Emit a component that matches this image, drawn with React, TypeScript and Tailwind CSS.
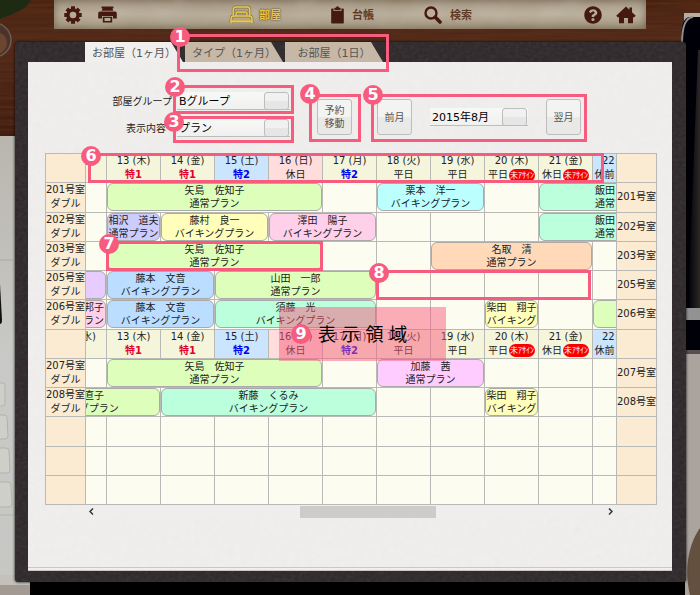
import { useState } from 'react'
import type { ReactNode } from 'react'
import { FaQuestionCircle } from 'react-icons/fa'

type Day = { label: string; note: string; kind: 'week' | 'sat' | 'sun'; noteStyle?: string; badge?: boolean }

type Slot = {
  span?: number
  color?: string
  name?: string
  plan?: string
  mark?: 'booking' | 'empty'
}

type Row = { room?: string; slots: Slot[] }

const GREEN = 'bg-[#ddffbb]'
const MINT = 'bg-[#bbffdd]'
const BLUE = 'bg-[#bbddff]'
const YELLOW = 'bg-[#ffffbb]'
const PINK = 'bg-[#ffd0ea]'
const PURPLE = 'bg-[#ccccff]'
const LILAC = 'bg-[#e6ccff]'
const CYAN = 'bg-[#bbffff]'
const ORANGE = 'bg-[#ffd9b8]'
const VIOLET = 'bg-[#ffccff]'

const red = 'font-bold text-[#e6002d]'
const blue = 'font-bold text-[#0000f0]'

const days: Day[] = [
  { label: '12 (水)', note: '', kind: 'week' },
  { label: '13 (木)', note: '特1', kind: 'week', noteStyle: red },
  { label: '14 (金)', note: '特1', kind: 'week', noteStyle: red },
  { label: '15 (土)', note: '特2', kind: 'sat', noteStyle: blue },
  { label: '16 (日)', note: '休日', kind: 'sun' },
  { label: '17 (月)', note: '特2', kind: 'week', noteStyle: blue },
  { label: '18 (火)', note: '平日', kind: 'week' },
  { label: '19 (水)', note: '平日', kind: 'week' },
  { label: '20 (木)', note: '平日', kind: 'week', badge: true },
  { label: '21 (金)', note: '休日', kind: 'week', badge: true },
  { label: '22', note: '休前', kind: 'sat' },
]

const dayColor = {
  week: 'bg-[#f5f5dc]',
  sat: 'bg-[#cce5ff]',
  sun: 'bg-[#ffdddd]',
}

const viking = 'バイキングプラン'
const normal = '通常プラン'
const empty = (n: number): Slot[] => Array.from({ length: n }, () => ({}))

const upperRows: Row[] = [
  {
    room: '201号室',
    slots: [
      {},
      { span: 4, color: GREEN, name: '矢島　佐知子', plan: normal },
      {},
      { span: 2, color: CYAN, name: '栗本　洋一', plan: viking },
      {},
      { span: 2, color: MINT, name: '飯田　　　', plan: normal },
    ],
  },
  {
    room: '202号室',
    slots: [
      {},
      { color: PURPLE, name: '相沢　道夫', plan: normal },
      { span: 2, color: YELLOW, name: '藤村　良一', plan: viking },
      { span: 2, color: PINK, name: '澤田　陽子', plan: viking },
      ...empty(3),
      { span: 2, color: MINT, name: '飯田　　　', plan: normal },
    ],
  },
  {
    room: '203号室',
    slots: [
      {},
      { span: 4, color: GREEN, name: '矢島　佐知子', plan: normal, mark: 'booking' },
      ...empty(2),
      { span: 3, color: ORANGE, name: '名取　清', plan: normal },
      {},
    ],
  },
  {
    room: '205号室',
    slots: [
      { color: LILAC },
      { span: 2, color: BLUE, name: '藤本　文音', plan: viking },
      { span: 3, color: GREEN, name: '山田　一郎', plan: normal },
      { mark: 'empty' },
      ...empty(4),
    ],
  },
  {
    room: '206号室',
    slots: [
      { color: PINK, name: '　　　邦子', plan: normal },
      { span: 2, color: BLUE, name: '藤本　文音', plan: viking },
      { span: 3, color: MINT, name: '須藤　光', plan: viking },
      ...empty(2),
      { color: YELLOW, name: '柴田　翔子', plan: 'バイキング' },
      {},
      { color: GREEN },
    ],
  },
]

const lowerRows: Row[] = [
  {
    room: '207号室',
    slots: [
      {},
      { span: 4, color: GREEN, name: '矢島　佐知子', plan: normal },
      {},
      { span: 2, color: VIOLET, name: '加藤　茜', plan: normal },
      ...empty(3),
    ],
  },
  {
    room: '208号室',
    slots: [
      { span: 2, color: GREEN, name: '　　　直子', plan: viking },
      { span: 4, color: MINT, name: '新藤　くるみ', plan: viking },
      ...empty(2),
      { color: YELLOW, name: '柴田　翔子', plan: 'バイキング' },
      ...empty(2),
    ],
  },
  { slots: empty(11) },
  { slots: empty(11) },
  { slots: empty(11) },
]

function Grain({ id, freq, className }: { id: string; freq: string; className: string }) {
  return (
    <svg className={`pointer-events-none absolute inset-0 size-full ${className}`} aria-hidden="true">
      <filter id={id}>
        <feTurbulence type="fractalNoise" baseFrequency={freq} numOctaves="3" />
        <feColorMatrix type="saturate" values="0" />
      </filter>
      <rect width="100%" height="100%" filter={`url(#${id})`} />
    </svg>
  )
}

function Desk() {
  return (
    <svg
      className="absolute inset-0 size-full"
      viewBox="0 0 700 595"
      preserveAspectRatio="none"
      aria-hidden="true"
    >
      <defs>
        <linearGradient id="wood" x1="0" y1="0" x2="0" y2="1">
          <stop offset="0" stopColor="#47200f" />
          <stop offset="0.3" stopColor="#532a1a" />
          <stop offset="1" stopColor="#3f1a0f" />
        </linearGradient>
        <linearGradient id="laptop" x1="0" y1="0" x2="0" y2="1">
          <stop offset="0" stopColor="#b9b6ad" />
          <stop offset="0.5" stopColor="#c9c9c7" />
          <stop offset="1" stopColor="#c6c6c3" />
        </linearGradient>
        <linearGradient id="glare" x1="0" y1="0" x2="1" y2="0">
          <stop offset="0" stopColor="#000008" />
          <stop offset="1" stopColor="#2d2825" />
        </linearGradient>
        <filter id="woodgrain">
          <feTurbulence type="fractalNoise" baseFrequency="0.012 0.35" numOctaves="3" />
          <feColorMatrix values="0 0 0 0 0.1  0 0 0 0 0.03  0 0 0 0 0.01  1.6 0 0 0 -0.55" />
        </filter>
      </defs>
      <rect width="700" height="595" fill="#000" />
      <rect width="700" height="140" fill="url(#wood)" />
      <rect width="700" height="140" filter="url(#woodgrain)" />
      <path d="M0 0H31C27 9 15 13 0 19Z" fill="#1e2a14" />
      <circle cx="-6" cy="40" r="17" fill="#4a3328" stroke="#6d5c50" strokeWidth="1.5" />
      <circle cx="-4" cy="43" r="11" fill="#6b4530" />
      <path d="M0 136H16V595H0Z" fill="url(#laptop)" />
      <path d="M0 260H13" stroke="#aaa89f" />
      <path d="M0 284L2 320Q2 324 0 324Z" fill="#111" />
      <g fill="#cfcfca" stroke="#b3b1a9">
        <path d="M-5 383H3Q5 383 5 386V403Q5 406 3 406H-5Z" />
        <path d="M-5 415H4Q7 415 7 418L8 436Q8 439 5 439H-5Z" />
        <path d="M-5 448H6Q9 448 9 451L10 470Q10 473 7 473H-5Z" />
        <path d="M-5 482H8Q11 482 11 485L12 504Q12 507 9 507H-5Z" />
        <path d="M-5 515H15" />
      </g>
      <path d="M0 575H30V595H0Z" fill="#a39b93" />
      <path d="M0 575H28L30 585H0Z" fill="#c4c1bb" />
      <path d="M684 13H700V30H684Z" fill="#b7ada2" />
      <path d="M681 40Q681 17 690 17H700V352H684Z" fill="#000008" />
      <path d="M682 43Q682 18 693 17" fill="none" stroke="#8d8d92" strokeWidth="2" />
      <path d="M698 50H700V308H688Z" fill="url(#glare)" />
      <rect x="685" y="308" width="15" height="12" fill="#929292" />
      <rect x="685" y="350" width="15" height="4" fill="#55504f" />
      <rect x="685" y="354" width="15" height="241" fill="#aba39d" />
      <path d="M700 528C688 545 684 570 690 595H700Z" fill="#63503f" />
    </svg>
  )
}

function GearIcon() {
  return (
    <svg className="size-[18px]" viewBox="0 0 18 18" aria-hidden="true">
      <g stroke="#45190d" strokeWidth="4">
        <path d="M9 0.3V4M9 14V17.7M0.3 9H4M14 9H17.7" />
        <path d="M2.9 2.9L5.4 5.4M12.6 12.6L15.1 15.1M2.9 15.1L5.4 12.6M12.6 5.4L15.1 2.9" />
      </g>
      <circle cx="9" cy="9" r="5" fill="none" stroke="#45190d" strokeWidth="3.4" />
    </svg>
  )
}

function PrinterIcon() {
  return (
    <svg className="h-[17px] w-[19px]" viewBox="0 0 19 17" fill="#45190d" aria-hidden="true">
      <path d="M3.5 0.5H15.5V2.2H14.5L15.3 4.8H3.7L4.5 2.2H3.5Z" />
      <path d="M2 5.5H17Q18.8 5.5 18.8 7.3V12.5H15V10H4V12.5H0.2V7.3Q0.2 5.5 2 5.5Z" />
      <path d="M4.8 10.8H14.2V16.5H4.8Z M6.5 12V15H12.5V12Z" fillRule="evenodd" />
    </svg>
  )
}

function BedIcon() {
  const shape = (
    <>
      <path d="M4.2 10.5V5Q4.2 2 7.2 2H17.8Q20.8 2 20.8 5V10.5" />
      <path d="M7 10.5V9Q7 7 9 7H16Q18 7 18 9V10.5" />
      <path d="M2 18.5V14Q2 11 5 11H20Q23 11 23 14V18.5" />
      <path d="M2 16.3H23" strokeWidth="2" />
    </>
  )
  return (
    <svg className="h-5 w-[25px]" viewBox="0 0 25 20" fill="none" strokeLinejoin="round" aria-hidden="true">
      <g stroke="#85744f" strokeWidth="2.8">{shape}</g>
      <g stroke="#ecca4c" strokeWidth="1.5">{shape}</g>
    </svg>
  )
}

function ClipboardIcon() {
  return (
    <svg className="h-[18px] w-[13px]" viewBox="0 0 13 18" fill="#45190d" aria-hidden="true">
      <path d="M1 2.5H2.6V5H10.4V2.5H12Q12.8 2.5 12.8 3.3V16.7Q12.8 17.5 12 17.5H1Q0.2 17.5 0.2 16.7V3.3Q0.2 2.5 1 2.5Z" />
      <path d="M3.4 1.7H4.9Q5 0.2 6.5 0.2T8.1 1.7H9.6V4.2H3.4Z" />
    </svg>
  )
}

function SearchIcon() {
  return (
    <svg className="size-[18px]" viewBox="0 0 18 18" fill="none" stroke="#45190d" aria-hidden="true">
      <circle cx="7" cy="7" r="5.5" strokeWidth="2.4" />
      <path d="M11.3 11.3L16 16" strokeWidth="3.6" strokeLinecap="round" />
    </svg>
  )
}

function HomeIcon() {
  return (
    <svg className="h-[18px] w-5" viewBox="0 0 20 18" fill="#45190d" aria-hidden="true">
      <path d="M10 0.6L13.4 3.8V1.5H16V6.2L19.8 9.8L18.3 11.2H17V17.2H12V12H8V17.2H3V11.2H1.7L0.2 9.8Z" />
    </svg>
  )
}

function Callout({ no, className, dot = '-left-[10px] -top-[10px]' }: { no: number; className: string; dot?: string }) {
  return (
    <div className={`pointer-events-none absolute z-20 border-3 border-[#f75c7e] ${className}`}>
      <Dot no={no} className={`absolute ${dot}`} />
    </div>
  )
}

function Dot({ no, className = '' }: { no: number; className?: string }) {
  return (
    <span
      className={`flex size-5 items-center justify-center rounded-full bg-[#f75c7e] text-[16px] leading-5 font-bold text-white ${className}`}
    >
      {no}
    </span>
  )
}

function Picker({ id, label, value, options }: { id: string; label?: string; value: string; options: string[] }) {
  return (
    <>
      <select
        id={id}
        aria-label={label}
        defaultValue={value}
        className="h-[18px] w-full appearance-none border-b border-[#bdbdbb] bg-linear-to-b from-[#f8f8f6] to-[#f0f0ee] pt-[3px] pl-[2px] text-[11px] leading-[14px] text-black"
      >
        {options.map((o) => (
          <option key={o}>{o}</option>
        ))}
      </select>
      <span className="pointer-events-none absolute top-0 right-px h-[18px] w-[25px] rounded-[3px] border border-[#bdbdbd] bg-linear-to-b from-[#f1f1f1] from-50% to-[#e6e6e6] to-50%" />
    </>
  )
}

function StepButton({ children }: { children: ReactNode }) {
  return (
    <button className="h-9 w-[35px] rounded-[3px] border border-[#bdbdbd] bg-linear-to-b from-[#f3f3f2] from-50% to-[#e9e9e8] to-50% text-[10px] leading-[13px] text-[#555]">
      {children}
    </button>
  )
}

function DayRow() {
  return (
    <tr className="h-[29px]">
      <td className="border border-[#b9b9b6] bg-[#faebd2]" />
      {days.map((d, i) => (
        <th
          key={d.label}
          scope="col"
          className={`overflow-hidden border border-[#b9b9b6] p-0 font-normal ${dayColor[d.kind]}`}
        >
          <div className={i === 0 ? 'flex justify-end' : 'flex justify-center'}>
            <div className={i === 0 ? 'w-[54px] shrink-0' : 'w-full'}>
              <div className={i === 10 ? 'pl-[9px] text-left' : ''}>{d.label}</div>
              <div className={`flex h-[14px] items-center justify-center gap-px ${d.noteStyle ?? ''}`}>
                {d.note}
                {d.badge && (
                  <span className="rounded-full bg-[#f80000] px-px text-[8px] leading-[13px] text-white">未ｱｻｲﾝ</span>
                )}
              </div>
            </div>
          </div>
        </th>
      ))}
      <td className="border border-[#b9b9b6] bg-[#faebd2]" />
    </tr>
  )
}

function SlotCell({ slot, first, last }: { slot: Slot; first: boolean; last: boolean }) {
  const { span = 1, color, name, plan, mark } = slot
  // bookings that run past the visible days keep their real width and get clipped
  let width = 'w-full'
  if (first || last) width = span === 2 ? 'w-[162px]' : 'w-[54px]'

  return (
    <td colSpan={span} className="relative border border-[#b9b9b6] bg-[#fcfcf0] p-0">
      {color && (
        <div className={`flex overflow-hidden ${first ? 'justify-end' : ''}`}>
          <div
            className={`h-7 shrink-0 overflow-hidden rounded-md border border-[#aaa] text-center leading-[13px] ${width} ${color}`}
          >
            <div className="-mx-1 flex flex-col items-center whitespace-pre">
              <span>{name}</span>
              <span>{plan}</span>
            </div>
          </div>
        </div>
      )}
      {mark === 'booking' && <Callout no={7} className="-inset-px" />}
      {mark === 'empty' && <Callout no={8} className="-inset-y-px -left-px w-[405%]" />}
    </td>
  )
}

function RoomRow({ row }: { row: Row }) {
  return (
    <tr className="h-[29px]">
      <th scope="row" className="border border-[#b9b9b6] bg-[#faebd2] p-0 text-center font-normal whitespace-nowrap">
        {row.room && (
          <>
            <div>{row.room}</div>
            <div>ダブル</div>
          </>
        )}
      </th>
      {row.slots.map((s, i) => (
        <SlotCell key={i} slot={s} first={i === 0} last={i === row.slots.length - 1} />
      ))}
      <td className="border border-[#b9b9b6] bg-[#faebd2] p-0 text-center whitespace-nowrap">{row.room}</td>
    </tr>
  )
}

function Schedule() {
  return (
    <div className="relative">
      <table className="h-[352px] w-full table-fixed border-collapse text-[10px] leading-[14px] text-[#222]">
        <colgroup>
          <col className="w-10" />
          <col className="w-[21px]" />
          {days.slice(1, 10).map((d) => (
            <col key={d.label} />
          ))}
          <col className="w-6" />
          <col className="w-10" />
        </colgroup>
        <tbody>
          <DayRow />
          {upperRows.map((r, i) => (
            <RoomRow key={i} row={r} />
          ))}
          <DayRow />
          {lowerRows.map((r, i) => (
            <RoomRow key={i} row={r} />
          ))}
        </tbody>
      </table>
      <Callout no={6} className="top-0 right-[53px] left-[43px] h-[30px]" />
      <div className="absolute top-[154px] left-[234px] z-20 flex h-[54px] w-[167px] items-center gap-[7px] bg-[#f75c7e]/50 pl-3 text-[18px] text-black">
        <Dot no={9} />
        <span className="whitespace-nowrap">表 示 領 域</span>
      </div>
    </div>
  )
}

const tabs = ['お部屋（1ヶ月）', 'タイプ（1ヶ月）', 'お部屋（1日）']

export default function App() {
  const [tab, setTab] = useState(0)

  const renderTab = (i: number) => (
    <button
      key={i}
      role="tab"
      aria-selected={tab === i}
      onClick={() => setTab(i)}
      className={`h-full w-[98px] pt-1 text-center text-[11px] whitespace-nowrap text-[#555] [clip-path:polygon(0_0,calc(100%-12px)_0,100%_100%,0_100%)] ${
        tab === i ? 'bg-[#f0efed]' : 'bg-[#c6b7a6]'
      }`}
    >
      {tabs[i]}
    </button>
  )

  return (
    <div className="relative min-h-screen overflow-hidden pb-[13px] font-['DejaVu_Sans','Noto_Sans_CJK_JP',sans-serif]">
      <Desk />

      <header className="relative mx-[54px] flex h-[29px] items-center justify-between bg-linear-to-b from-[#a89a84] via-[#b9ad98] to-[#a3957c] px-[10px] text-[11px] font-bold text-[#5f3a26] shadow-[inset_0_0_8px_#6b5a42]">
        <Grain id="parchment" freq="0.03 0.05" className="opacity-20" />
        <div className="relative flex items-center gap-4">
          <button aria-label="設定">
            <GearIcon />
          </button>
          <button aria-label="印刷">
            <PrinterIcon />
          </button>
        </div>
        <nav className="relative flex items-center gap-[50px]">
          <a href="#rooms" className="flex items-center gap-[5px] text-[#e8c545] [text-shadow:0_0_1px_#5a4520,0_0_2px_#5a4520]">
            <BedIcon />
            <span className="pt-1">部屋</span>
          </a>
          <a href="#ledger" className="flex items-center gap-2">
            <ClipboardIcon />
            <span className="pt-1">台帳</span>
          </a>
          <a href="#search" className="flex items-center gap-2">
            <SearchIcon />
            <span className="pt-1">検索</span>
          </a>
        </nav>
        <div className="relative flex items-center gap-[14px]">
          <button aria-label="ヘルプ">
            <FaQuestionCircle className="size-[18px] text-[#45190d]" />
          </button>
          <button aria-label="ホーム">
            <HomeIcon />
          </button>
        </div>
      </header>

      <main className="relative mt-[13px] mr-[14px] ml-[15px] rounded-[3px] bg-[#2c2628] pr-[14px] pb-[11px] pl-[13px] shadow-[0_0_3px_#000]">
        <Grain id="leather" freq="0.25 0.3" className="opacity-10" />
        <div role="tablist" className="relative flex h-5 gap-[2px] pl-[57px]">
          {renderTab(0)}
          <div className="relative flex gap-[2px]">
            {renderTab(1)}
            {renderTab(2)}
            <Callout no={1} className="-top-2 -right-[6px] -bottom-[10px] -left-2" />
          </div>
        </div>

        <div className="relative border-b-4 border-double border-[#c9c8c4] bg-[#f0efed] pr-[15px] pb-[49px] pl-[17px]">
          <Grain id="paper" freq="0.15" className="opacity-5" />
          <div className="relative flex items-start pt-[30px] pb-4 pl-[67px] text-[10px] text-[#222]">
            <form className="grid grid-cols-[60px_113px] gap-x-[5px] gap-y-[9px] text-right leading-[20px] whitespace-nowrap">
              <label htmlFor="group" className="h-[18px]">
                部屋グループ
              </label>
              <div className="relative flex h-[18px]">
                <Picker id="group" value="Bグループ" options={['Aグループ', 'Bグループ']} />
                <Callout no={2} className="-inset-x-1 -top-[7px] -bottom-1" dot="-left-[11px] -top-[11px]" />
              </div>
              <label htmlFor="content" className="h-[18px] pr-[6px]">
                表示内容
              </label>
              <div className="relative flex h-[18px]">
                <Picker id="content" value="プラン" options={['プラン', '人数']} />
                <Callout no={3} className="-inset-x-1 -top-[3px] -bottom-[6px]" dot="-left-[12px] -top-[7px]" />
              </div>
            </form>
            <div className="relative mt-[7px] ml-[27px] flex">
              <StepButton>
                予約
                <br />
                移動
              </StepButton>
              <Callout no={4} className="-top-[5px] -right-[9px] -bottom-[7px] -left-2" dot="-left-[12px] -top-[13px]" />
            </div>
            <div className="relative mt-[7px] ml-[25px] flex items-center gap-[18px]">
              <StepButton>前月</StepButton>
              <div className="relative flex w-[98px]">
                <Picker id="month" label="表示月" value="2015年8月" options={['2015年7月', '2015年8月', '2015年9月']} />
              </div>
              <StepButton>翌月</StepButton>
              <Callout no={5} className="-inset-x-[6px] -top-[5px] -bottom-[7px]" dot="-left-[11px] -top-[12px]" />
            </div>
          </div>

          <Schedule />

          <div className="relative mr-10 ml-10 flex h-[13px] items-center bg-[#efeeee]">
            <button aria-label="前へ" className="w-[13px]">
              <svg className="mx-auto h-[7px] w-[5px]" viewBox="0 0 5 7" fill="none" stroke="#333" strokeWidth="1.5">
                <path d="M4 0.5L1 3.5L4 6.5" />
              </svg>
            </button>
            <div className="flex flex-1 pl-[38%]">
              <div className="h-3 w-[136px] bg-[#cccccb]" />
            </div>
            <button aria-label="次へ" className="w-[13px]">
              <svg className="mx-auto h-[7px] w-[5px]" viewBox="0 0 5 7" fill="none" stroke="#333" strokeWidth="1.5">
                <path d="M1 0.5L4 3.5L1 6.5" />
              </svg>
            </button>
          </div>
        </div>
      </main>
    </div>
  )
}
